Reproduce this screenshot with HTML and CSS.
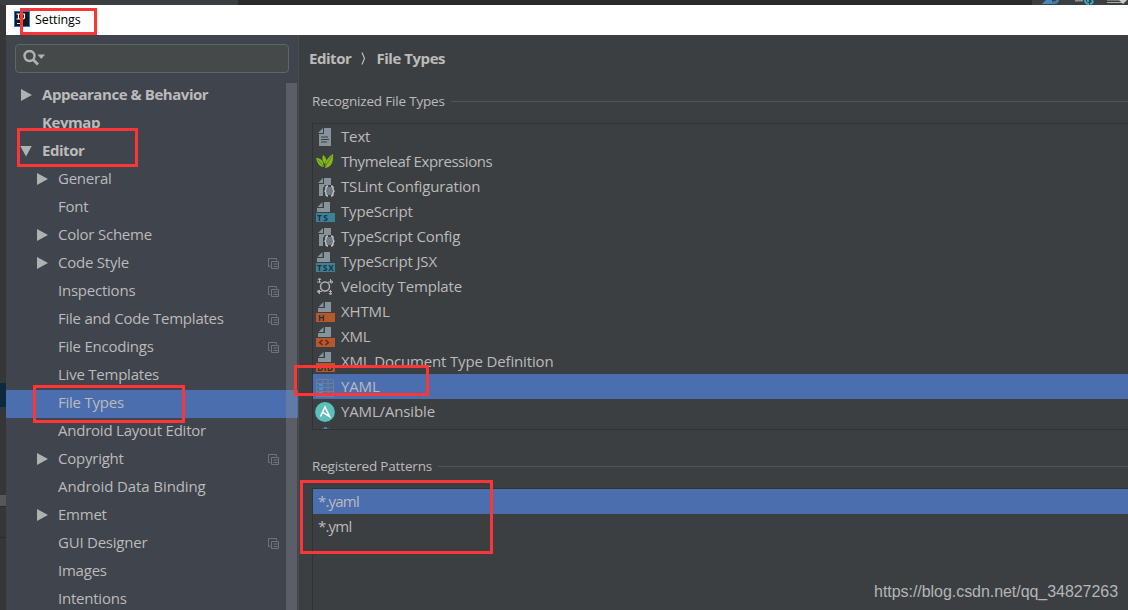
FILE: index.html
```html
<!DOCTYPE html>
<html lang="en">
<head>
<meta charset="utf-8">
<title>Settings</title>
<link rel="stylesheet" href="styles.css">
</head>
<body>
<svg class="defs" width="0" height="0">
  <defs>
    <symbol id="copy" viewBox="0 0 12 12"><path d="M2.5 8.5H.5v-8h8v2M3.5 3.5h7v7h-7zM5.5 6h4M5.5 8.5h4" fill="none" stroke="#6f747a"/></symbol>
    <symbol id="page" viewBox="0 0 20 20"><path d="M9 1h7v18H4V7h5z" fill="#87939a"/><path d="M8 1v5H3z" fill="#87939a"/></symbol>
    <symbol id="half" viewBox="0 0 20 20"><path d="M9 0h6v10H2V6h7z" fill="#87939a"/><path d="M7.500 0v5H2.500z" fill="#87939a"/></symbol>
    <symbol id="braces" viewBox="0 0 20 20"><path d="M9 1h7v7h-6l-2 3v8H4V7h5z" fill="#87939a"/><path d="M8 1v5H3z" fill="#87939a"/><path d="M12 10h5v8h-5z" fill="#707a80"/><path d="M13 9q-2 0-2 2v1.500q0 1.500-1.500 1.700 1.500 0 1.500 1.600v1.200q0 2 2 2M16 9q2 0 2 2v1.500q0 1.500 1.500 1.700-1.500 0-1.500 1.600v1.200q0 2-2 2" fill="none" stroke="#c4c9cc" stroke-width="1.500"/></symbol>
  </defs>
</svg>
<div class="screen">
  <div class="backdrop">
    <div class="toolbar-edge">
      <svg width="100" height="5" viewBox="0 0 100 5"><path d="M14 4l4-4h6v4z" fill="#4a88b8"/><path d="M24 3q5 0 6-3" stroke="#3f7fb2" stroke-width="2.500" fill="none"/><path d="M47 0h8v1.500h-8z" fill="#87939a"/><path d="M57 0q0 4 4 4M62 4q4-1 2-4M60 0v2" stroke="#3ba5c4" stroke-width="2" fill="none"/><path d="M79 0h14M79 2.500h15" stroke="#aaa" stroke-width="1.200"/><path d="M91 0h8l-4 4z" fill="#ccc"/></svg>
    </div>
    <div class="gutter"><i class="mark"></i><i class="thumb"></i><i class="rule"></i></div>
  </div>
  <div class="window">
    <header class="titlebar">
      <svg width="16" height="16" viewBox="0 0 16 16"><path d="M0 0h16v16H0z" fill="#1c78dc"/><path d="M1 1h14v14H1z" fill="#171717"/><path d="M2.500 3h4M4.500 3v5M2.500 8h4M8 3h3M10.500 3v3.500q0 1.500-2.500 1.500" stroke="#fff" stroke-width="1.200" fill="none"/><path d="M3 12.500h5" stroke="#fff"/></svg>
      <span class="title">Settings</span>
    </header>
    <div class="content">
      <aside class="sidebar">
        <div class="search">
          <svg width="24" height="17" viewBox="0 0 24 17"><circle cx="6.500" cy="6" r="5" fill="none" stroke="#afb1b3" stroke-width="2.400"/><path d="M10 9.500l5 5" stroke="#afb1b3" stroke-width="2.800"/><path d="M14.500 4.500H22L18.200 9z" fill="#afb1b3"/></svg>
        </div>
        <div class="tree-area">
          <div class="tree">
            <div class="node top"><i class="closed"></i><b>Appearance &amp; Behavior</b></div>
            <div class="node top"><i></i><b>Keymap</b></div>
            <div class="node top"><i class="open"></i><b>Editor</b></div>
            <div class="node"><i class="closed"></i><span>General</span></div>
            <div class="node"><i></i><span>Font</span></div>
            <div class="node"><i class="closed"></i><span>Color Scheme</span></div>
            <div class="node"><i class="closed"></i><span>Code Style</span><svg class="copy"><use href="#copy"/></svg></div>
            <div class="node"><i></i><span>Inspections</span><svg class="copy"><use href="#copy"/></svg></div>
            <div class="node"><i></i><span>File and Code Templates</span><svg class="copy"><use href="#copy"/></svg></div>
            <div class="node"><i></i><span>File Encodings</span><svg class="copy"><use href="#copy"/></svg></div>
            <div class="node"><i></i><span>Live Templates</span></div>
            <div class="node selected"><i></i><span>File Types</span></div>
            <div class="node"><i></i><span>Android Layout Editor</span></div>
            <div class="node"><i class="closed"></i><span>Copyright</span><svg class="copy"><use href="#copy"/></svg></div>
            <div class="node wide"><i></i><span>Android Data Binding</span></div>
            <div class="node"><i class="closed"></i><span>Emmet</span></div>
            <div class="node"><i></i><span>GUI Designer</span><svg class="copy"><use href="#copy"/></svg></div>
            <div class="node"><i></i><span>Images</span></div>
            <div class="node"><i></i><span>Intentions</span></div>
          </div>
          <div class="scrollbar"></div>
        </div>
      </aside>
      <main class="panel">
        <div class="crumbs"><b>Editor</b><svg width="5" height="13" viewBox="0 0 5 13"><path d="M1 .5l2.500 6L1 12.500" fill="none" stroke="#bbb" stroke-width="1.200"/></svg><b>File Types</b></div>
        <div class="section first"><span>Recognized File Types</span><hr></div>
        <div class="list types">
          <div class="row"><svg class="icon"><use href="#page"/><path d="M6 10h7M6 12.500h8M6 15h6" stroke="#3c3f41" stroke-width="1.200"/></svg><span>Text</span></div>
          <div class="row tight"><svg class="icon"><path d="M1 6q5 0 7 4l1 5q-6 0-8-9zM8 3q4 3 3 6l-1 3q-4-4-2-9zM18 2q1 13-8 14 0-10 8-14z" fill="#83b81a"/><path d="M3 8l6 7M17 4l-7 11" stroke="#4d7018" stroke-width=".7"/></svg><span>Thymeleaf Expressions</span></div>
          <div class="row"><svg class="icon"><use href="#braces"/></svg><span>TSLint Configuration</span></div>
          <div class="row"><svg class="icon"><use href="#half"/><path d="M1 11h19v9H1z" fill="#3d8199"/><text class="badge" x="2" y="19" textLength="11">TS</text></svg><span>TypeScript</span></div>
          <div class="row"><svg class="icon"><use href="#braces"/></svg><span>TypeScript Config</span></div>
          <div class="row"><svg class="icon"><use href="#half"/><path d="M1 11h19v9H1z" fill="#3d8199"/><text class="badge" x="2" y="19" textLength="17">TSX</text></svg><span>TypeScript JSX</span></div>
          <div class="row"><svg class="icon"><circle cx="10" cy="9.500" r="4.500" fill="none" stroke="#afb1b3" stroke-width="1.500"/><path d="M4.500 2v15M2 5h15M15.500 2v15M3 14.500h14" fill="none" stroke="#afb1b3" stroke-dasharray="4 7 4"/><path d="M3 3l1.500-2L6 3M16 3.500L18 5l-2 1.500M4 13l-2 1.500L4 16M14 16l1.500 2 1.500-2" fill="none" stroke="#afb1b3"/></svg><span>Velocity Template</span></div>
          <div class="row"><svg class="icon"><use href="#half" x="1"/><path d="M1 11h19v9H1z" fill="#b8572b"/><text class="badge" x="3" y="19">H</text></svg><span>XHTML</span></div>
          <div class="row"><svg class="icon"><use href="#half" x="1"/><path d="M1 11h19v9H1z" fill="#b8572b"/><path d="M7.500 13L4.500 15.500l3 2.500M10.500 13l3 2.500-3 2.500" fill="none" stroke="#552b1c" stroke-width="1.400"/></svg><span>XML</span></div>
          <div class="row"><svg class="icon"><use href="#half" x="1"/><path d="M1 11h19v9H1z" fill="#b8572b"/><text class="badge" x="2" y="19" textLength="16">DTD</text></svg><span>XML Document Type Definition</span></div>
          <div class="row selected"><svg class="icon"><path d="M1.500 2.500h17v17h-17zM1.500 6.500h17M1.500 10.500h17M1.500 14.500h17M7.500 2.500v17M13 2.500v17" fill="none" stroke="#707e91"/><path d="M4 8h3M4 12h3M4 16h3" stroke="#3e9bd8" stroke-width="2"/></svg><span>YAML</span></div>
          <div class="row"><svg class="icon"><circle cx="10" cy="10" r="9.900" fill="#5bbfbd"/><path d="M5.500 14.500L10 5l4.500 9.500L7.500 10.300" fill="none" stroke="#fff" stroke-width="1.600"/></svg><span>YAML/Ansible</span></div>
          <div class="row"><svg class="icon"><path d="M7 3V1.500h2V0h3v1.500h2V3z" fill="#3884a4"/></svg></div>
        </div>
        <div class="section second"><span>Registered Patterns</span><hr></div>
        <div class="list patterns">
          <div class="row selected"><span>*.yaml</span></div>
          <div class="row"><span>*.yml</span></div>
        </div>
      </main>
    </div>
  </div>
  <div class="mark-box m-title"></div>
  <div class="mark-box m-editor"></div>
  <div class="mark-box m-types"></div>
  <div class="mark-box m-yaml"></div>
  <div class="mark-box m-patterns"></div>
  <div class="watermark">https://blog.csdn.net/qq_34827263</div>
</div>
</body>
</html>
```
FILE: styles.css
```css
* { box-sizing: border-box; }
body { margin: 0; }
.defs { position: absolute; }
.screen {
  position: relative;
  width: 1128px;
  height: 610px;
  overflow: hidden;
  padding: 5px 0 0 6px;
  background: #353637;
  color: #bbb;
  font: 15px/20px "Open Sans", "Noto Sans", sans-serif;
  letter-spacing: -0.15px;
  white-space: nowrap;
}
.backdrop { position: absolute; inset: 0; }
.toolbar-edge {
  display: flex;
  justify-content: flex-end;
  height: 5px;
  background: linear-gradient(90deg, #3c3f41 238px, #2b2b2b 238px 1032px, #3c3f41 1032px);
}
.gutter { display: flex; flex-direction: column; width: 6px; padding-top: 378px; }
.mark { height: 24px; background: #0d293e; }
.thumb { height: 11px; margin-top: 88px; background: #555758; }
.rule { height: 32px; border: 1px solid #292a2b; border-width: 1px 0; }
.window { position: relative; display: flex; flex-direction: column; height: 605px; }
.titlebar {
  display: flex;
  align-items: center;
  gap: 5px;
  height: 30px;
  padding: 0 0 2px 8px;
  background: #fff;
  color: #000;
}
.title { margin-top: 2px; font-size: 12.5px; letter-spacing: -0.1px; }
.content { display: flex; height: 575px; }
.sidebar { width: 293px; background: #40444d; border-right: 1px solid #4a4c4f; flex: none; }
.search {
  display: flex;
  width: 274px;
  height: 29px;
  margin: 9px 0 0 9px;
  padding: 5px 7px;
  border: 1px solid #616568;
  border-radius: 4px;
  background: #45494a;
}
.tree-area { position: relative; height: 537px; padding-top: 9px; overflow: hidden; letter-spacing: -0.23px; }
.tree-area b { letter-spacing: -0.45px; }
.node { display: flex; align-items: center; height: 28px; padding: 0 18px 4px 30px; }
.node.top { padding-left: 14px; }
.node.wide { letter-spacing: -0.1px; }
.node i { width: 22px; margin-top: 2px; }
.closed::before, .open::before { content: ""; display: block; background: #afb1b3; }
.closed::before { width: 11px; height: 12px; margin-left: 1px; clip-path: polygon(0 0, 100% 50%, 0 100%); }
.open::before { width: 12px; height: 11px; clip-path: polygon(0 0, 100% 0, 50% 100%); }
.selected { background: #4b6eaf; }
.copy { width: 12px; height: 12px; margin: 4px 0 0 auto; }
.scrollbar { position: absolute; top: 10px; right: 1px; bottom: 0; width: 11px; background: rgba(150, 150, 155, .32); }
.panel { flex: 1; min-width: 0; background: #3c3f41; }
.crumbs { display: flex; align-items: center; gap: 10px; height: 20px; margin: 13px 0 0 10px; letter-spacing: -0.45px; }
.section { display: flex; align-items: center; gap: 6px; height: 20px; margin-left: 13px; font-size: 13.5px; letter-spacing: -0.18px; }
.first { margin-top: 23px; }
.second { margin-top: 26px; }
.section hr { flex: 1; margin: 0; border: 0; border-top: 1px solid #515456; }
.list { margin-left: 13px; border: 1px solid #303233; border-right: 0; overflow: hidden; }
.types { height: 307px; margin-top: 12px; }
.patterns { height: 140px; margin-top: 12px; letter-spacing: -0.8px; }
.row { display: flex; align-items: center; gap: 6px; height: 25px; padding-left: 2px; }
.row span { margin-top: -2px; }
.row.tight { letter-spacing: -0.42px; }
.patterns .row { padding-left: 5px; }
.icon { width: 20px; height: 20px; flex: none; }
.badge { font: bold 8.5px "Open Sans", sans-serif; letter-spacing: 0; fill: #20323a; }
.mark-box { position: absolute; border: 3px solid #fc3636; }
.m-title { left: 20px; top: 8px; width: 77px; height: 27px; }
.m-editor { left: 17px; top: 128px; width: 121px; height: 39px; }
.m-types { left: 33px; top: 385px; width: 152px; height: 38px; }
.m-yaml { left: 294px; top: 365px; width: 135px; height: 31px; }
.m-patterns { left: 300px; top: 480px; width: 193px; height: 74px; }
.watermark { position: absolute; right: 10px; bottom: 8px; font: 16px/20px "Liberation Sans", sans-serif; letter-spacing: -0.05px; color: #b4b5b6; }
```
